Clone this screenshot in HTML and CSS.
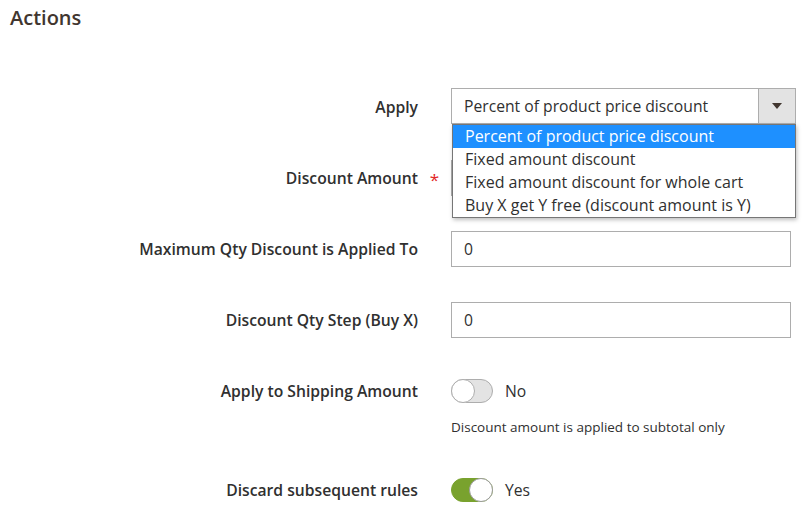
FILE: index.html
```html
<!DOCTYPE html>
<html>
<head>
<meta charset="utf-8">
<link rel="stylesheet" href="styles.css">
</head>
<body>
<div class="page">
  <h2 class="title">Actions</h2>
  <div class="form">
    <div class="row">
      <div class="label">Apply</div>
      <div class="marker"></div>
      <div class="control">
        <div class="select-wrap">
          <div class="select">
            <span class="select-text">Percent of product price discount</span>
            <span class="select-btn"><span class="tri"></span></span>
          </div>
          <ul class="dropdown">
            <li class="opt active">Percent of product price discount</li>
            <li class="opt">Fixed amount discount</li>
            <li class="opt">Fixed amount discount for whole cart</li>
            <li class="opt">Buy X get Y free (discount amount is Y)</li>
          </ul>
        </div>
      </div>
    </div>
    <div class="row">
      <div class="label">Discount Amount</div>
      <div class="marker"><span class="req">*</span></div>
      <div class="control"><div class="input"></div></div>
    </div>
    <div class="row">
      <div class="label">Maximum Qty Discount is Applied To</div>
      <div class="marker"></div>
      <div class="control"><div class="input">0</div></div>
    </div>
    <div class="row">
      <div class="label">Discount Qty Step (Buy X)</div>
      <div class="marker"></div>
      <div class="control"><div class="input">0</div></div>
    </div>
    <div class="row">
      <div class="label">Apply to Shipping Amount</div>
      <div class="marker"></div>
      <div class="control">
        <div class="switch-line">
          <span class="toggle"><span class="knob"></span></span>
          <span class="switch-text">No</span>
        </div>
        <div class="note">Discount amount is applied to subtotal only</div>
      </div>
    </div>
    <div class="row">
      <div class="label">Discard subsequent rules</div>
      <div class="marker"></div>
      <div class="control">
        <div class="switch-line">
          <span class="toggle on"><span class="knob"></span></span>
          <span class="switch-text">Yes</span>
        </div>
      </div>
    </div>
  </div>
</div>
</body>
</html>
```
FILE: styles.css
```css
* { box-sizing: border-box; }
html, body { margin: 0; padding: 0; background: #fff; }
body {
  font-family: "Open Sans", "Noto Sans", sans-serif;
  color: #303030;
  width: 806px;
  height: 522px;
  overflow: hidden;
}
.page { padding-top: 4px; }
.title {
  margin: 0;
  padding-left: 10px;
  font-size: 20px;
  line-height: 28px;
  font-weight: 600;
  color: #41362f;
}
.form {
  margin-top: 57px;
  display: flex;
  flex-direction: column;
  gap: 35px;
}
.row {
  display: grid;
  grid-template-columns: 418px 33px 1fr;
  align-items: start;
}
.label {
  height: 36px;
  display: flex;
  align-items: center;
  justify-content: flex-end;
  font-size: 15.7px;
  font-weight: 600;
  color: #303030;
  white-space: nowrap;
  padding-bottom: 1px;
}
.marker {
  height: 36px;
  display: flex;
  align-items: center;
  justify-content: center;
}
.req {
  color: #e22626;
  font-size: 17px;
  line-height: 1;
  padding-top: 3px;
}
.control { min-width: 0; }
.select-wrap { position: relative; width: 345px; margin-top: -1px; }
.select {
  height: 36px;
  border: 1px solid #adadad;
  display: flex;
  align-items: stretch;
  background: #fff;
}
.select-text {
  flex: 1;
  display: flex;
  align-items: center;
  padding-left: 12px;
  font-size: 15.7px;
  color: #303030;
}
.select-btn {
  width: 37px;
  background: #e3e3e3;
  border-left: 1px solid #adadad;
  display: flex;
  align-items: center;
  justify-content: center;
}
.tri {
  width: 0;
  height: 0;
  border-left: 5px solid transparent;
  border-right: 5px solid transparent;
  border-top: 6px solid #41362f;
}
.dropdown {
  position: absolute;
  top: 36px;
  left: 1px;
  right: 0;
  margin: 0;
  padding: 0;
  list-style: none;
  background: #fff;
  border: 1px solid #767676;
  box-shadow: 1px 2px 4px rgba(0,0,0,0.25);
  z-index: 5;
}
.opt {
  height: 23px;
  line-height: 22px;
  padding-left: 12px;
  font-size: 16px;
  color: #303030;
  white-space: nowrap;
}
.opt.active { background: #1e90ff; color: #fff; }
.input {
  width: 340px;
  height: 36px;
  border: 1px solid #adadad;
  padding-left: 12px;
  display: flex;
  align-items: center;
  font-size: 15.7px;
  color: #303030;
  background: #fff;
}
.switch-line {
  height: 36px;
  display: flex;
  align-items: center;
  gap: 12px;
}
.toggle {
  position: relative;
  width: 42px;
  height: 24px;
  border-radius: 12px;
  background: #e3e3e3;
  border: 1px solid #adadad;
  display: flex;
  align-items: center;
  justify-content: flex-start;
}
.toggle .knob {
  width: 24px;
  height: 24px;
  margin: -1px;
  border-radius: 50%;
  background: #fff;
  border: 1px solid #adadad;
}
.toggle.on {
  background: #79a22e;
  border-color: #79a22e;
  justify-content: flex-end;
}
.toggle.on .knob { border-color: #9b9b9b; }
.switch-text { font-size: 15.7px; color: #303030; }
.note {
  margin-top: 9px;
  font-size: 13.5px;
  line-height: 19px;
  color: #303030;
  white-space: nowrap;
}
```
